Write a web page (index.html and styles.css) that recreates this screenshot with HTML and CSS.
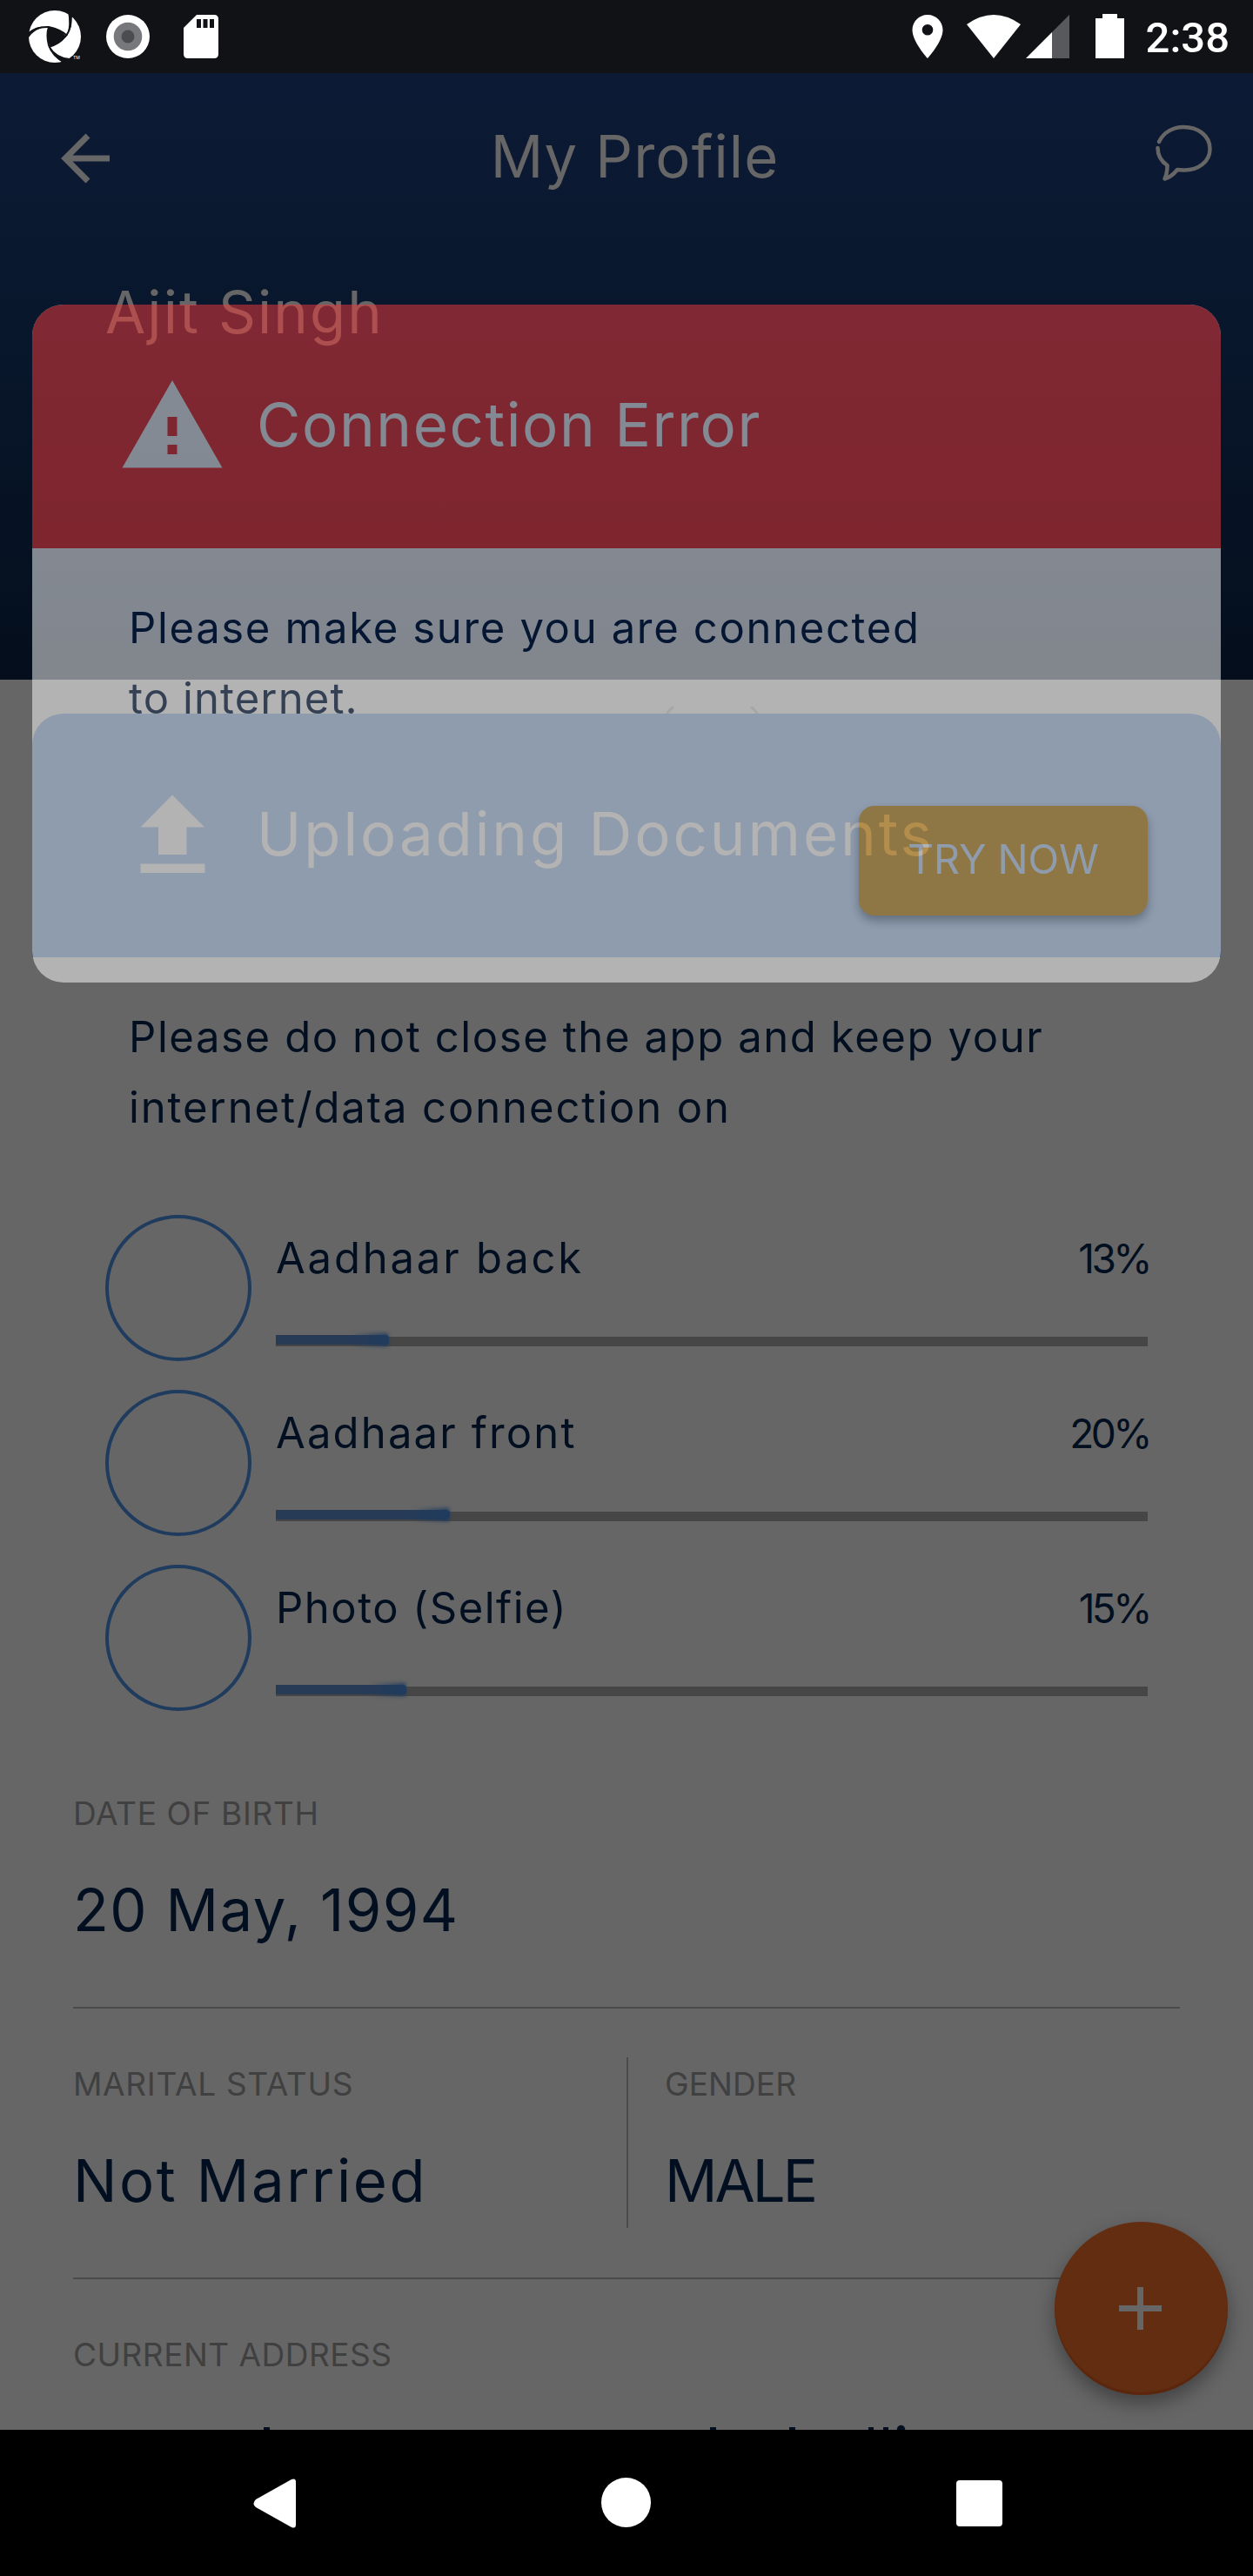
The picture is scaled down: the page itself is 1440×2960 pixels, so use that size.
FILE: index.html
```html
<!DOCTYPE html>
<html lang="en">
<head>
<meta charset="utf-8">
<title>My Profile</title>
<link rel="stylesheet" href="styles.css">
</head>
<body>
<div class="screen">
  <div class="statusbar">
    <svg class="status-left" width="260" height="84" viewBox="20 0 260 84">
      <circle cx="63" cy="42" r="30" fill="#fff"/>
      <g fill="none" stroke="#111216" stroke-width="2">
        <path d="M33 39Q42 30 56 31Q70 34 77 41"/>
        <path d="M80 14Q84 32 75 42Q68 51 56 54"/>
        <path d="M74 72Q60 64 56 52Q53 40 56 31"/>
      </g>
      <path d="M56 31Q70 33 76 42Q68 51 57 53Q53 42 56 31Z" fill="#111216"/>
      <path d="M78 13L83 18L82 30L77 41Q81 28 78 13ZM32 37L34 36Q42 30 52 31Q40 33 33 43ZM73 72L80 67Q65 66 57 53Q62 67 73 72Z" fill="#111216"/>
      <text x="84" y="68" class="tm">TM</text>
      <circle cx="147" cy="42" r="25" fill="#fff"/><circle cx="147" cy="42" r="16.3" fill="#77787b"/><circle cx="147" cy="42" r="7.5" fill="#4b4c4f"/>
      <path d="M226 17H246Q251 17 251 22V62Q251 67 246 67H216Q211 67 211 62V32Z" fill="#fff"/>
      <path d="M226 22h5v10h-5zM233.500 22h5v10h-5zM241 22h5v10h-5z" fill="#111216"/>
    </svg>
    <div class="status-right">
      <svg width="250" height="84" viewBox="1040 0 250 84">
        <path fill="#fff" fill-rule="evenodd" d="M1064 17C1054 17 1046.500 25 1046.500 34.500C1046.500 48 1064 67 1064 67S1081.500 48 1081.500 34.500C1081.500 25 1074 17 1064 17ZM1064 28a6.300 6.300 0 1 1 0 12.600a6.300 6.300 0 1 1 0-12.600Z"/>
        <path fill="#fff" d="M1109 28Q1140 6 1171 28L1140 67Z"/>
        <path fill="#58595c" d="M1227 17V67H1207V37Z"/>
        <path fill="#fff" d="M1177 67L1207 37V67ZM1257 21h8v-5h17v5h8v46h-33z"/>
      </svg>
      <span class="clock">2:38</span>
    </div>
  </div>

  <header class="appbar">
    <div class="appbar-row">
      <svg width="56" height="62" viewBox="0 -4 56 62" fill="none" stroke="#666" stroke-width="7"><path d="M31 3L5 29L31 55M6 29H56"/></svg>
      <h1 class="t-title">My Profile</h1>
      <svg width="66" height="66" viewBox="1326 147 66 66" overflow="visible" fill="none" stroke="#666" stroke-width="4.500" stroke-linecap="round" stroke-linejoin="round"><path d="M1331 163C1336 152 1347 146 1359 146C1376 146 1389.500 156 1389.500 171C1389.500 186 1376 196 1359 195.500L1352 195C1348 200 1343 204 1337.500 205.500C1340 200 1340.500 196 1340.500 190C1333 185 1329.500 178 1329.500 170"/></svg>
    </div>
    <div class="name t-name">Ajit Singh</div>
  </header>

  <main class="details">
    <svg class="caption" width="112" height="8" viewBox="0 0 112 8" fill="none" stroke="#4c4c4c" stroke-width="3"><path d="M9 0Q4 4 1 9M98 0Q103 4 106 9"/></svg>
    <section class="field">
      <div class="label t-dob">DATE OF BIRTH</div>
      <div class="value t-date">20 May, 1994</div>
    </section>
    <section class="field split">
      <div class="cell">
        <div class="label t-mar">MARITAL STATUS</div>
        <div class="value t-not">Not Married</div>
      </div>
      <div class="cell second">
        <div class="label t-gen">GENDER</div>
        <div class="value t-male">MALE</div>
      </div>
    </section>
    <section class="field last">
      <div class="label t-addr">CURRENT ADDRESS</div>
      <svg width="960" height="6" viewBox="84 2786 960 6" fill="#020f20"><path d="M303 2789h7v3h-7zM816 2789h7v3h-7zM907 2789h7v3h-7zM998 2789h6v3h-6zM1015 2789h6v3h-6z"/><circle cx="1035.500" cy="2791.500" r="4.700"/></svg>
    </section>
  </main>

  <nav class="navbar">
    <svg width="1440" height="168" viewBox="0 2792 1440 168" fill="#fff"><path d="M294 2872Q289 2877 294 2881L335 2904Q340 2906 340 2901V2852Q340 2847 335 2849Z"/><circle cx="719.500" cy="2875.500" r="28.500"/><rect x="1099" y="2850" width="53" height="53" rx="4"/></svg>
  </nav>

  <div class="fab"><svg width="49" height="49" viewBox="0 0 49 49" fill="#666"><path d="M21 0h7v21h21v7H28v21h-7V28H0v-7h21z"/></svg></div>

  <section class="dialog upload">
    <div class="dialog-head">
      <svg width="116" height="100" viewBox="140 907 116 100" fill="#666"><path d="M198 912.500L235 949.500H214.500V981H182V949.500H161.500ZM161.500 991.500H235.500V1002H161.500Z"/></svg>
      <h2 class="t-upl">Uploading Documents</h2>
    </div>
    <p class="message"><span class="t-m3">Please do not close the app and keep your</span><br><span class="t-m4">internet/data connection on</span></p>
    <div class="items">
      <div class="item"><div class="thumb"></div><div class="info"><div class="line"><span class="t-ab">Aadhaar back</span><span class="pct">13%</span></div><div class="track"><div class="fill" style="width:13%"></div></div></div></div>
      <div class="item"><div class="thumb"></div><div class="info"><div class="line"><span class="t-af">Aadhaar front</span><span class="pct">20%</span></div><div class="track"><div class="fill" style="width:20%"></div></div></div></div>
      <div class="item"><div class="thumb"></div><div class="info"><div class="line"><span class="t-ph">Photo (Selfie)</span><span class="pct">15%</span></div><div class="track"><div class="fill" style="width:15%"></div></div></div></div>
    </div>
  </section>

  <section class="dialog error">
    <div class="dialog-head">
      <svg width="116" height="101" viewBox="0 0 116 101" fill="#fff" fill-rule="evenodd"><path d="M58 0L115.500 100.500H.500ZM52.500 42V64H63.500V42ZM52.500 74V85H63.500V74Z"/></svg>
      <h2 class="t-con">Connection Error</h2>
    </div>
    <p class="message"><span class="t-m1">Please make sure you are connected</span><br><span class="t-m2">to internet.</span></p>
    <div class="button">TRY NOW</div>
  </section>
</div>
</body>
</html>
```
FILE: styles.css
```css
* { box-sizing: border-box; margin: 0; padding: 0; }
body { background: #666; font-family: Inter, "Open Sans", sans-serif; font-weight: 400; }
h1, h2 { font-weight: 400; }
svg { display: block; flex: none; }
.screen { position: relative; width: 1440px; height: 2960px; overflow: hidden; display: flex; flex-direction: column; }
.statusbar { height: 84px; background: #111216; display: flex; justify-content: space-between; padding: 0 27px 0 20px; flex: none; }
.status-right { display: flex; gap: 26px; }
.status-right svg { margin-right: -1px; }
.tm { font: 5px Inter, sans-serif; fill: #fff; }
.clock { font: 500 49px/88px Roboto, sans-serif; color: #fff; }
.appbar { height: 697px; flex: none; background: linear-gradient(#0c1a35, #09172d 40%, #040e1c); color: #666; }
.appbar-row { display: flex; align-items: center; justify-content: space-between; height: 192px; padding: 0 47px 0 70px; }
.appbar h1, .name, .value, .dialog h2 { font-size: 67px; line-height: 80px; white-space: nowrap; }
.dialog h2 { font-size: 69px; }
.name { padding: 43px 0 0 121px; }
.details { height: 2011px; flex: none; overflow: hidden; padding: 31px 84px 0; background: #666; }
.caption { margin: 0 0 1177px 681px; }
.field { height: 311px; padding-top: 63.5px; border-bottom: 2px solid #4b4b4b; }
.label { font-size: 37px; line-height: 46px; color: #404040; margin-bottom: 48px; white-space: nowrap; }
.value { color: #020f20; }
.split { display: flex; padding-top: 56px; }
.cell { width: 636px; height: 196px; padding-top: 7.5px; }
.second { border-left: 2px solid #4b4b4b; padding-left: 42px; }
.last { border: 0; }
.last .label { margin-bottom: 57.5px; }
.navbar { height: 168px; background: #000; flex: none; }
.fab { position: absolute; left: 1212px; top: 2553px; width: 199px; height: 199px; border-radius: 50%; background: #632d11; box-shadow: 0 10px 22px rgba(0,0,0,.36), inset 0 -3px 1px #5b260e; padding: 75px 0 0 74px; }
.dialog { position: absolute; left: 37px; width: 1366px; border-radius: 36px; overflow: hidden; }
.dialog-head { height: 280px; display: flex; align-items: center; gap: 39px; padding: 0 103px 5px; }
.message { font-size: 49px; line-height: 81px; padding: 51px 0 0 111px; white-space: nowrap; }
.upload { top: 820px; height: 1180px; background: #666; color: #020f20; }
.upload .dialog-head { background: #1f395b; color: #666; }
.error { top: 350px; height: 779px; background: #fff; color: #041d46; opacity: .5; }
.error .dialog-head { background: #f63a3a; color: #fff; }
.button { width: 332px; height: 126px; margin: 83px 84px 0 auto; border-radius: 18px; background: #ffb531; color: #fff; font-size: 46.5px; box-shadow: 0 6px 12px rgba(0,0,0,.36); display: flex; align-items: center; justify-content: center; padding-bottom: 4px; }
.items { padding: 83px 84px 0; display: flex; flex-direction: column; gap: 33px; }
.item { display: flex; gap: 28px; height: 168px; }
.thumb { width: 168px; height: 168px; border: 4px solid #1f3b5e; border-radius: 50%; flex: none; }
.info { flex: 1; padding-top: 20px; }
.line { display: flex; justify-content: space-between; height: 60px; font-size: 49px; line-height: 60px; margin-bottom: 60px; white-space: nowrap; }
.pct { font-size: 46px; letter-spacing: -3.5px; margin-right: -2px; }
.track { height: 11px; background: #464646; isolation: isolate; }
.fill { position: relative; top: -2px; height: 11px; border-radius: 0 4px 4px 0; background: linear-gradient(90deg, #273b57 70%, #1f3b5e); }
.fill::after { content: ""; position: absolute; right: 1px; top: -2px; width: 42px; height: 15px; z-index: -1; background: linear-gradient(90deg, transparent, #1f3b5e); filter: blur(2px); }

/* Tracking per text */
.t-title { letter-spacing: 1.1px; padding-left: 6px; }
.t-name { letter-spacing: 2.1px; }
.t-dob { letter-spacing: .65px; }
.t-date { letter-spacing: 1.5px; }
.t-mar { letter-spacing: .7px; }
.t-not { letter-spacing: 2.6px; }
.t-gen { letter-spacing: .1px; }
.t-male { letter-spacing: -3px; }
.t-addr { letter-spacing: .5px; }
.t-upl { letter-spacing: 2.9px; }
.t-con { letter-spacing: 1.6px; }
.t-m1 { letter-spacing: 1.65px; }
.t-m2 { letter-spacing: 1.1px; }
.t-m3 { letter-spacing: 1.6px; }
.t-m4 { letter-spacing: 1.9px; }
.t-ab { letter-spacing: 2.8px; }
.t-af { letter-spacing: 2.15px; }
.t-ph { letter-spacing: 1.5px; }
```
